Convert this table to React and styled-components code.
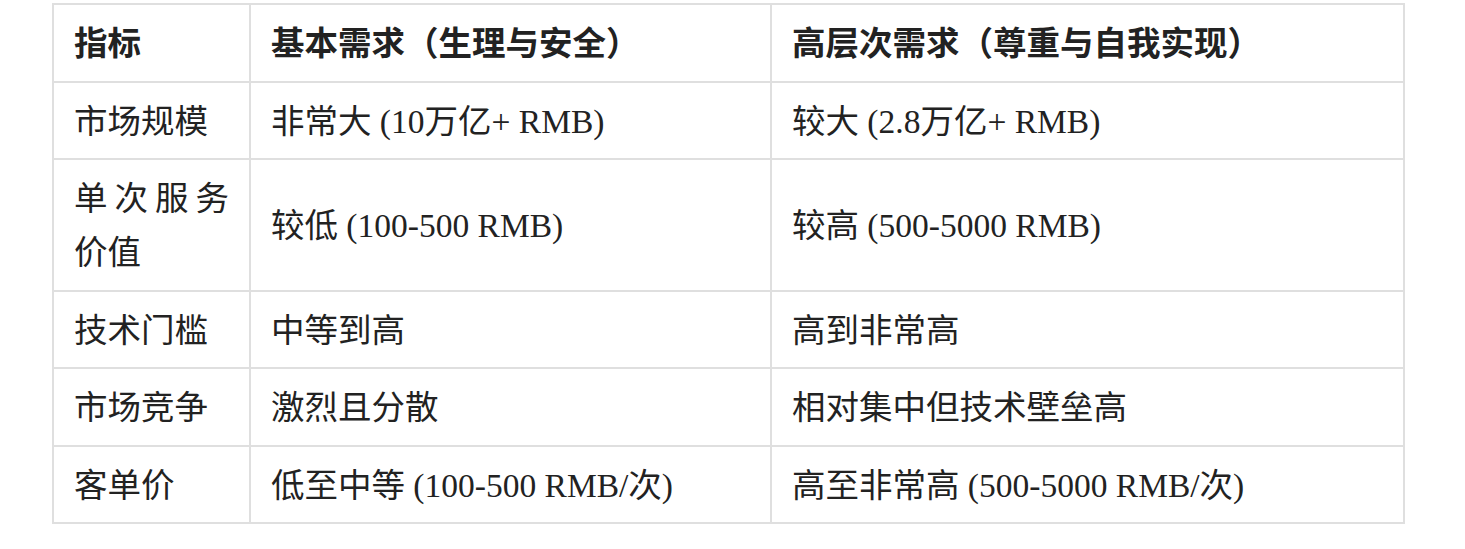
import React from 'react'
import styled, { createGlobalStyle } from 'styled-components'

const GlobalStyle = createGlobalStyle`
body {
    margin: 0;
    background: #fff;
    font-family: "Liberation Serif", "Noto Sans CJK SC", serif;
    color: #222;
}
`

const Page = styled.div`
padding: 3px 0 0 52px;
`

const Table = styled.table`
width: 1351px;
table-layout: fixed;
border-collapse: separate;
border-spacing: 0;
border-top: 2px solid #dfdfdf;
border-left: 2px solid #dfdfdf;
font-size: 33.5px;
line-height: 54px;
`

const Col = styled.col`
width: ${props => props.w}px;
`

const Cell = styled.td`
box-sizing: border-box;
padding: 12.25px 20px 9.25px;
border-right: 2px solid #dfdfdf;
border-bottom: 2px solid #dfdfdf;
text-align: ${props => (props.justify ? 'justify' : 'left')};
vertical-align: middle;
font-weight: ${props => (props.head ? 700 : 400)};
`

const header = ['指标', '基本需求（生理与安全）', '高层次需求（尊重与自我实现）']

const rows = [
    ['市场规模', '非常大 (10万亿+ RMB)', '较大 (2.8万亿+ RMB)'],
    ['单次服务价值', '较低 (100-500 RMB)', '较高 (500-5000 RMB)'],
    ['技术门槛', '中等到高', '高到非常高'],
    ['市场竞争', '激烈且分散', '相对集中但技术壁垒高'],
    ['客单价', '低至中等 (100-500 RMB/次)', '高至非常高 (500-5000 RMB/次)'],
]

export default function App() {
    return (
        <Page>
            <GlobalStyle />
            <Table>
                <colgroup>
                    <Col w={197} />
                    <Col w={521} />
                    <Col w={633} />
                </colgroup>
                <thead>
                    <tr>
                        {header.map((h, i) => <Cell as="th" head key={i}>{h}</Cell>)}
                    </tr>
                </thead>
                <tbody>
                    {rows.map((r, i) => (
                        <tr key={i}>
                            {r.map((c, j) => <Cell key={j} justify={j === 0}>{c}</Cell>)}
                        </tr>
                    ))}
                </tbody>
            </Table>
        </Page>
    )
}
